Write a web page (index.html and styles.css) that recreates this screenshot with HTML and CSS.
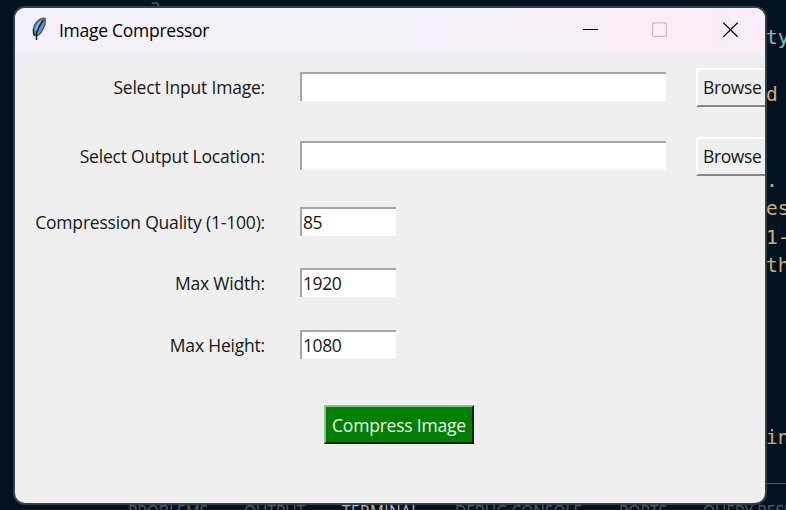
FILE: index.html
```html
<!DOCTYPE html>
<html lang="en">
<head>
<meta charset="utf-8">
<title>Image Compressor</title>
<link rel="stylesheet" href="styles.css">
</head>
<body>
<div class="editor">
  <div class="line-number">3</div>
  <div class="code">
    <div class="type">ty</div>
    <div></div>
    <div>d</div>
    <div></div>
    <div></div>
    <div>.</div>
    <div>es</div>
    <div>1-</div>
    <div>th</div>
    <div></div>
    <div></div>
    <div></div>
    <div></div>
    <div></div>
    <div>in</div>
  </div>
  <div class="panel">
    <span class="t1">PROBLEMS</span><span class="t2">OUTPUT</span><span class="t3 active">TERMINAL</span><span class="t4">DEBUG CONSOLE</span><span class="t5">PORTS</span><span>QUERY RESULTS</span>
  </div>
</div>
<main class="window">
  <header class="titlebar">
    <svg class="feather" width="18" height="25" viewBox="0 0 18 25">
      <path d="M4.5 18C2 13 4 6 10 2.5Q13 .5 15 1.5Q16 6 13.5 11Q11 17 7.5 18.5Z" fill="#5794d7" stroke="#555a66" stroke-width="1.5"/>
      <path d="M10.5 4Q7 8 6 13" fill="none" stroke="#8abdf0" stroke-width="1.5"/>
      <path d="M13.3 3Q9 9 6.5 16V23" fill="none" stroke="#15202d" stroke-width="1.5"/>
      <path d="M3.6 12V17L5 19" fill="none" stroke="#22272f" stroke-width="1.4"/>
    </svg>
    <h1>Image Compressor</h1>
    <div class="controls">
      <svg width="15" height="16" viewBox="0 0 15 16"><path d="M0 7.5H15" stroke="#000"/></svg>
      <svg class="maximize" width="15" height="16" viewBox="0 0 15 16"><rect x=".6" y=".8" width="13.8" height="13.6" rx="1" fill="none" stroke="#c3bac5" stroke-width="1.2"/></svg>
      <svg width="15" height="16" viewBox="0 0 15 16"><path d="M.3 .6L14.7 14.9M14.7 .6L.3 14.9" stroke="#000" stroke-width="1.3"/></svg>
    </div>
  </header>
  <div class="form">
    <span class="label">Select Input Image:</span><div class="field wide"></div><div class="button">Browse</div>
    <span class="label">Select Output Location:</span><div class="field wide"></div><div class="button">Browse</div>
    <span class="label">Compression Quality (1-100):</span><div class="field">85</div><i></i>
    <span class="label">Max Width:</span><div class="field">1920</div><i></i>
    <span class="label">Max Height:</span><div class="field">1080</div><i></i>
    <div class="submit">Compress Image</div>
  </div>
</main>
</body>
</html>
```
FILE: styles.css
```css
* { box-sizing: border-box; }
body {
  margin: 0;
  width: 786px;
  height: 510px;
  overflow: hidden;
  background: #011321;
  font-family: "Open Sans", "Noto Sans", sans-serif;
}
.editor { position: relative; height: 510px; overflow: hidden; }
.line-number {
  position: absolute;
  left: 150px;
  top: -5px;
  font: 18px/28px "DejaVu Sans Mono", monospace;
  color: #435b6e;
}
.code {
  padding: 24px 0 0 766px;
  font: 19.5px/28.55px "DejaVu Sans Mono", monospace;
  color: #d2ac70;
  white-space: nowrap;
}
.code div { height: 28.55px; }
.code .type { color: #72c5b0; }
.panel {
  position: absolute;
  left: 60px;
  top: 483px;
  width: 900px;
  height: 40px;
  padding: 16px 0 0 68px;
  border-top: 1px solid #4c6070;
  display: flex;
  font-size: 15.5px;
  line-height: 22px;
  color: #50606e;
  white-space: nowrap;
}
.t1 { width: 116px; }
.t2 { width: 98px; }
.t3 { width: 113px; letter-spacing: .4px; }
.t4 { width: 164px; }
.t5 { width: 84px; }
.active { color: #b4bcc3; }
.window {
  position: absolute;
  left: 13px;
  top: 6px;
  width: 754px;
  height: 499px;
  border: 2px solid #343e49;
  border-radius: 12px;
  background: #efefef;
  overflow: hidden;
}
.titlebar {
  height: 46px;
  display: flex;
  align-items: center;
  background: linear-gradient(90deg, #f4f0f8 0 50%, #f9edf7);
}
.feather { margin: -4px 0 0 15px; }
h1 {
  margin: -3px 0 0 11px;
  font-size: 17.5px;
  font-weight: 400;
  letter-spacing: -.27px;
  color: #000;
}
.controls { display: flex; gap: 55px; margin: -2px 27px 0 auto; }
.maximize { margin: 0 1px 0 -1px; }
.form {
  display: grid;
  grid-template-columns: 251px 366px 140px;
  grid-template-rows: 66px 72px 60px 62px 62px 98px;
  column-gap: 34px;
  align-items: center;
  font-size: 17.5px;
  letter-spacing: -.4px;
  color: #171717;
  white-space: nowrap;
}
.label { text-align: right; letter-spacing: -.2px; padding-right: 1px; }
.field {
  width: 96px;
  height: 29px;
  margin-bottom: 2px;
  padding-left: 1px;
  line-height: 27px;
  border-top: 2px solid #a5a5a5;
  border-left: 2px solid #a5a5a5;
  background: #fff;
}
.wide { width: 366px; }
.button {
  width: 90px;
  height: 39px;
  margin-left: -4px;
  padding-left: 5px;
  line-height: 34px;
  background: #efefef;
  border: 2px solid #fff;
  border-bottom-color: #858585;
}
.submit {
  grid-column: 1 / -1;
  width: 150px;
  height: 39px;
  margin: 0 0 2px 309px;
  text-align: center;
  line-height: 36px;
  letter-spacing: -.2px;
  color: #e9f4e9;
  background: #008000;
  border: 2px solid #80c880;
  border-right-color: #001c00;
  border-bottom-color: #001c00;
}
```
